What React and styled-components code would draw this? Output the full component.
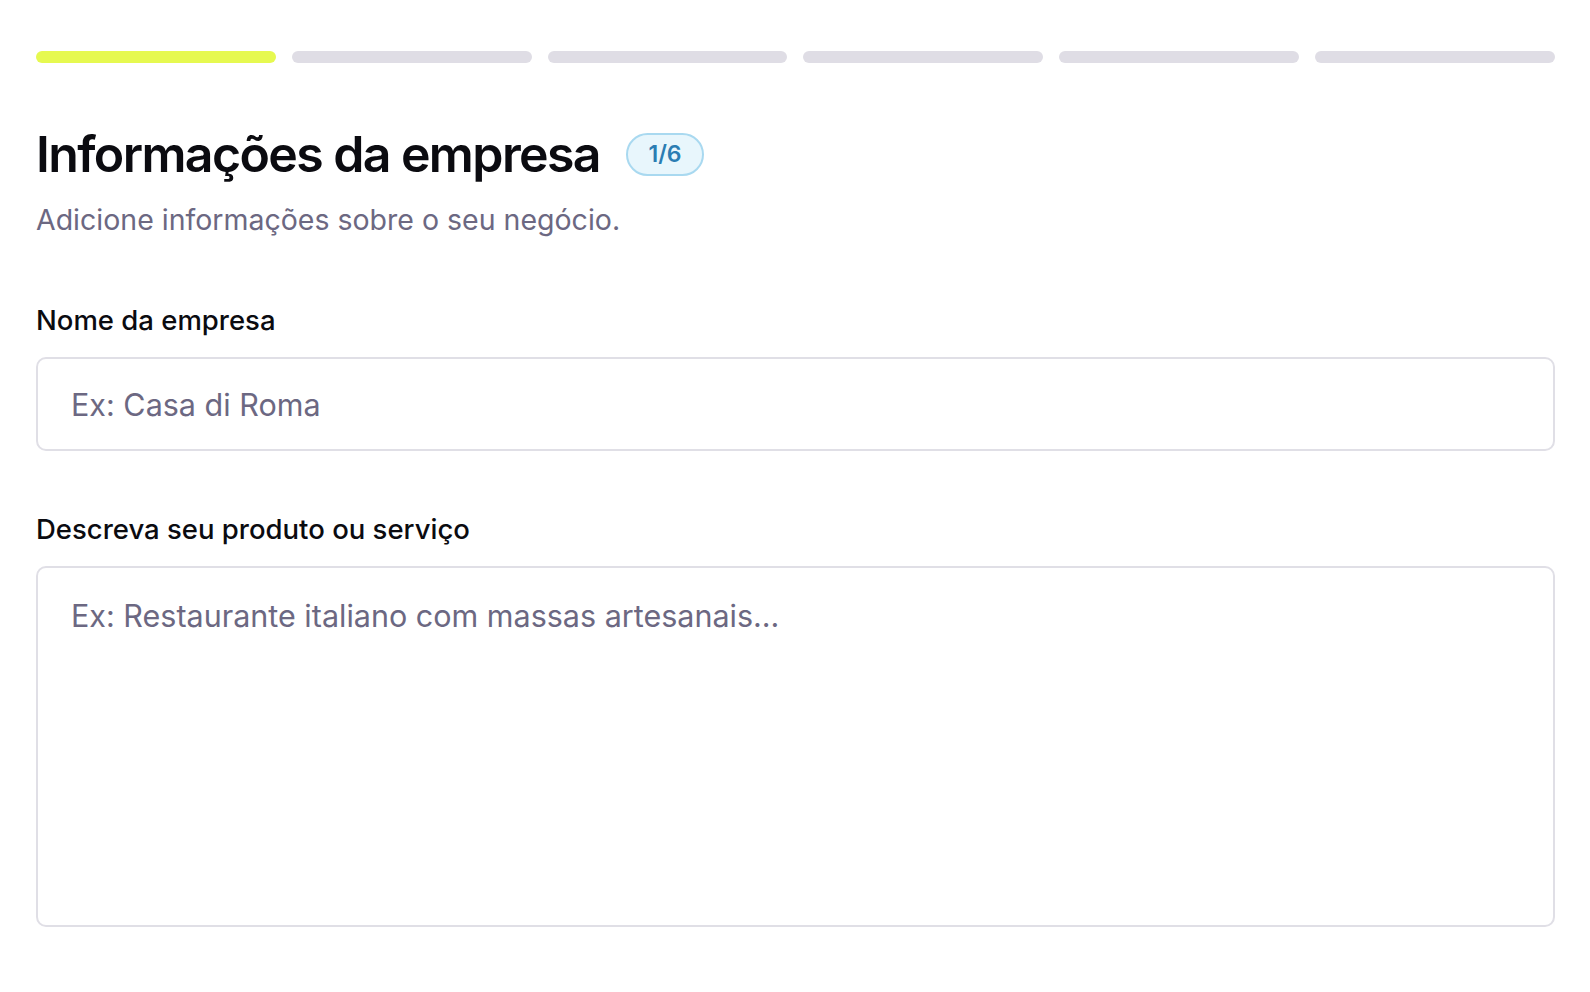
import React from "react";
import styled, { createGlobalStyle } from "styled-components";

const GlobalStyle = createGlobalStyle`
  body {
    margin: 0;
    background: #ffffff;
    font-family: Inter, "Noto Sans", sans-serif;
    color: #0d0d12;
  }
`;

const Page = styled.div`
  padding: 51px 35px 0 36px;
`;

const Steps = styled.div`
  display: grid;
  grid-template-columns: repeat(6, 1fr);
  gap: 16px;
`;

const Step = styled.div`
  height: 12px;
  border-radius: 6px;
  background: ${(p) => (p.active ? "#e6f950" : "#dfdde5")};
`;

const Header = styled.div`
  margin-top: 61px;
  display: flex;
  align-items: center;
  gap: 26px;
`;

const Title = styled.h1`
  margin: 0;
  font-size: 50px;
  font-weight: 600;
  letter-spacing: -1.6px;
  line-height: 60px;
  color: #0b0b10;
`;

const Badge = styled.span`
  box-sizing: border-box;
  display: inline-flex;
  align-items: center;
  justify-content: center;
  width: 78px;
  height: 43px;
  border: 2px solid #a9d9f0;
  border-radius: 22px;
  background: #e8f6fc;
  color: #2b7db3;
  font-size: 23px;
  font-weight: 600;
`;

const Subtitle = styled.p`
  margin: 18px 0 0;
  font-size: 28.5px;
  line-height: 36px;
  color: #6c6882;
`;

const Field = styled.div`
  display: flex;
  flex-direction: column;
  margin-top: ${(p) => p.top}px;
`;

const Label = styled.label`
  font-size: 27.5px;
  font-weight: 500;
  line-height: 34px;
  color: #0b0b10;
  margin-bottom: 20px;
`;

const Input = styled.input`
  box-sizing: border-box;
  width: 100%;
  height: 94px;
  padding: 0 33px;
  border: 2px solid #e0dfe6;
  border-radius: 10px;
  font-family: Inter, "Noto Sans", sans-serif;
  font-size: 30.5px;
  color: #0b0b10;
  outline: none;
  &::placeholder {
    color: #6c6882;
  }
`;

const TextArea = styled.textarea`
  box-sizing: border-box;
  width: 100%;
  height: 361px;
  padding: 28px 33px;
  border: 2px solid #e0dfe6;
  border-radius: 10px;
  font-family: Inter, "Noto Sans", sans-serif;
  font-size: 30.5px;
  line-height: 40px;
  color: #0b0b10;
  outline: none;
  resize: none;
  &::placeholder {
    color: #6c6882;
  }
`;

export default function App() {
  return (
    <>
      <GlobalStyle />
      <Page>
        <Steps>
          {[0, 1, 2, 3, 4, 5].map((i) => (
            <Step key={i} active={i === 0} />
          ))}
        </Steps>
        <Header>
          <Title>Informações da empresa</Title>
          <Badge>1/6</Badge>
        </Header>
        <Subtitle>Adicione informações sobre o seu negócio.</Subtitle>
        <Field top={65}>
          <Label>Nome da empresa</Label>
          <Input placeholder="Ex: Casa di Roma" />
        </Field>
        <Field top={61}>
          <Label>Descreva seu produto ou serviço</Label>
          <TextArea placeholder="Ex: Restaurante italiano com massas artesanais..." />
        </Field>
      </Page>
    </>
  );
}
